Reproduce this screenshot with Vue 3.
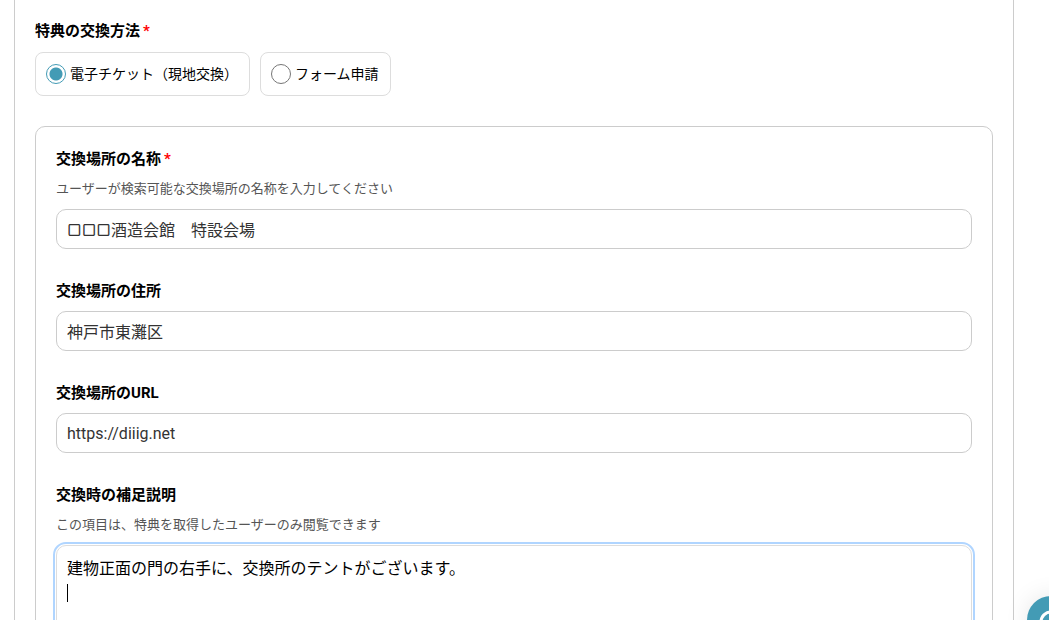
<template>
  <main class="page">
    <form class="panel" @submit.prevent>
      <fieldset class="method">
        <legend class="label">特典の交換方法<span class="required">*</span></legend>
        <div class="choices">
          <label v-for="m in methods" :key="m.value" class="choice">
            <input v-model="method" type="radio" name="method" :value="m.value" />
            <span>{{ m.text }}</span>
          </label>
        </div>
      </fieldset>

      <section class="place">
        <div v-for="f in fields" :key="f.id" class="field">
          <label class="label" :for="f.id">
            {{ f.label }}<span v-if="f.required" class="required">*</span>
          </label>
          <p v-if="f.hint" class="hint">{{ f.hint }}</p>
          <input :id="f.id" v-model="f.value" class="control" type="text" />
        </div>

        <div class="field">
          <label class="label" for="note">交換時の補足説明</label>
          <p class="hint">この項目は、特典を取得したユーザーのみ閲覧できます</p>
          <div class="note">
            <textarea id="note" v-model="note" class="control" rows="5"></textarea>
            <span class="caret"></span>
          </div>
        </div>
      </section>
    </form>

    <button class="chat" type="button" aria-label="チャット">
      <svg viewBox="0 0 48 48" fill="none" stroke="#fff" stroke-width="3">
        <circle cx="24" cy="26" r="10" />
      </svg>
    </button>
  </main>
</template>

<script setup>
import { ref } from 'vue'

const methods = [
  { value: 'ticket', text: '電子チケット（現地交換）' },
  { value: 'form', text: 'フォーム申請' }
]
const method = ref('ticket')

const fields = ref([
  {
    id: 'place-name',
    label: '交換場所の名称',
    required: true,
    hint: 'ユーザーが検索可能な交換場所の名称を入力してください',
    value: '▢▢▢酒造会館　特設会場'
  },
  { id: 'place-address', label: '交換場所の住所', value: '神戸市東灘区' },
  { id: 'place-url', label: '交換場所のURL', value: 'https://diiig.net' }
])

const note = ref('建物正面の門の右手に、交換所のテントがございます。\n')
</script>

<style>
body {
  margin: 0;
  background: #fff;
}
</style>

<style scoped>
.page {
  height: 100vh;
  overflow: hidden;
  color: #000;
  font-family: Roboto, Inter, 'Noto Sans CJK JP', sans-serif;
}

.panel {
  box-sizing: border-box;
  min-height: 100%;
  margin: 0 35px 0 14px;
  padding: 20px;
  border: 1px solid #ccc;
  border-width: 0 1px;
}

.method {
  margin: 0 0 30px;
  padding: 0;
  border: 0;
}

.label {
  display: block;
  padding: 0;
  font-size: 15px;
  font-weight: 700;
  line-height: 23px;
}

.required {
  margin-left: 3px;
  color: #f00;
}

.choices {
  display: flex;
  gap: 10px;
  margin-top: 9px;
}

.choice {
  display: flex;
  align-items: center;
  gap: 4px;
  box-sizing: border-box;
  height: 44px;
  padding: 0 11px 0 10px;
  border: 1px solid #ddd;
  border-radius: 8px;
  font-size: 14px;
  line-height: 20px;
}

.choice input {
  appearance: none;
  box-sizing: border-box;
  width: 20px;
  height: 20px;
  margin: 0;
  border: 1px solid #767676;
  border-radius: 50%;
}

.choice input:checked {
  border-color: #439bb5;
  background: radial-gradient(circle, #439bb5 6px, #fff 7px);
}

.place {
  display: flex;
  flex-direction: column;
  gap: 31px;
  padding: 21px 20px;
  border: 1px solid #ccc;
  border-radius: 10px;
}

.hint {
  margin: 9px 0 11px;
  color: #555;
  font-size: 13px;
  line-height: 18px;
}

.control {
  display: block;
  box-sizing: border-box;
  width: 100%;
  height: 40px;
  padding: 0 10px;
  border: 1px solid #ccc;
  border-radius: 10px;
  outline: none;
  background: #fff;
  color: #333;
  font-family: inherit;
  font-size: 16px;
}

.label + .control {
  margin-top: 8px;
}

.note {
  position: relative;
}

.note .control {
  height: 140px;
  padding: 11px 10px;
  border-color: #ddd;
  outline: 2px solid #b0d5ff;
  outline-offset: 1px;
  color: #000;
  line-height: 24px;
  resize: none;
}

.caret {
  position: absolute;
  top: 39px;
  left: 11px;
  width: 1px;
  height: 18px;
  background: #000;
}

.chat {
  position: fixed;
  right: -26px;
  bottom: -24px;
  width: 48px;
  height: 48px;
  padding: 0;
  border: 0;
  border-radius: 50%;
  background: #439bb5;
  box-shadow: 0 0 24px rgba(0, 0, 0, 0.1);
}

.chat svg {
  display: block;
}
</style>
